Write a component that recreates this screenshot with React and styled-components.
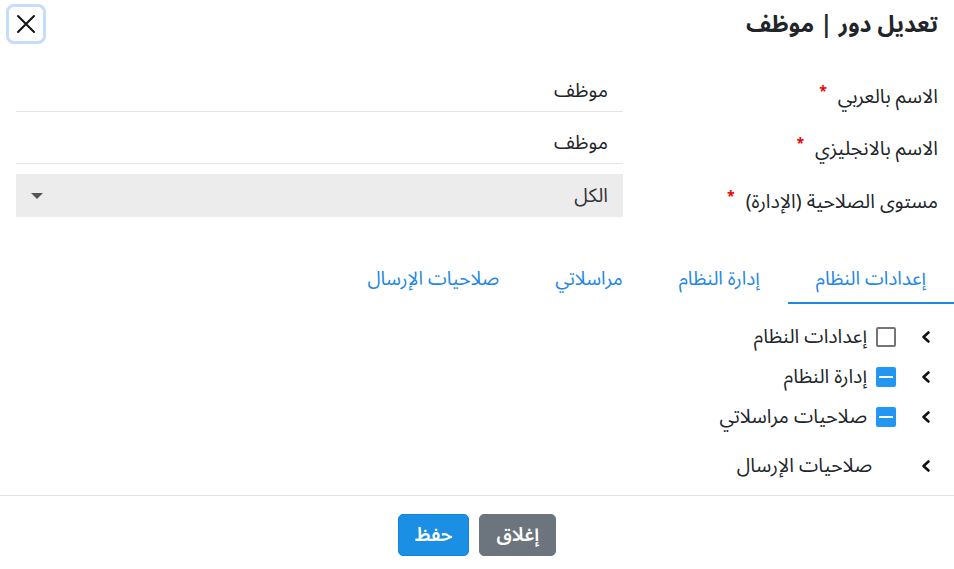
import React from 'react'
import styled, { createGlobalStyle } from 'styled-components'

const GlobalStyle = createGlobalStyle`
  * { box-sizing: border-box; }
  body {
    margin: 0;
    background: #fff;
    color: #212529;
    font-family: "Noto Sans Arabic", "DejaVu Sans", "Noto Sans", sans-serif;
  }
`

const Dialog = styled.div`
  direction: rtl;
  width: 954px;
  min-height: 569px;
  display: flex;
  flex-direction: column;
  background: #fff;
`

const Header = styled.header`
  height: 44px;
  display: flex;
  justify-content: space-between;
  align-items: center;
  padding: 4px 16px 0 6px;
`

const Title = styled.h2`
  margin: 0;
  font-size: 23px;
  line-height: 1;
  font-weight: 700;
  color: #212529;
`

const CloseButton = styled.button`
  width: 40px;
  height: 40px;
  display: flex;
  align-items: center;
  justify-content: center;
  background: #fff;
  border: 3px solid #c5dcfb;
  border-radius: 8px;
  padding: 0;
  cursor: pointer;
`

const Body = styled.div`
  padding: 0 16px 8px;
  flex: 1;
`

const Form = styled.div`
  margin-top: 26px;
  display: flex;
  flex-direction: column;
  gap: 10px;
`

const FormRow = styled.div`
  display: grid;
  grid-template-columns: 300px 1fr;
  column-gap: 15px;
  align-items: center;
`

const Label = styled.label`
  height: 42px;
  font-size: 19.5px;
  line-height: 28px;
  padding-top: 13px;
  color: #212529;
`

const Required = styled.span`
  color: #e00;
  font-size: 14px;
  line-height: 0;
  font-weight: 700;
  margin-right: 11px;
  vertical-align: 7px;
`

const TextInput = styled.div`
  height: 42px;
  display: flex;
  align-items: center;
  padding: 0 15px;
  font-size: 19.5px;
  line-height: 28px;
  border-bottom: 1px solid #e3e3e3;
`

const Select = styled.div`
  height: 43px;
  display: flex;
  align-items: center;
  justify-content: space-between;
  padding: 0 15px 0 14px;
  background: #ececec;
  font-size: 19.5px;
  line-height: 28px;
  color: #333;
`

const Caret = styled.span`
  width: 0;
  height: 0;
  border-left: 6px solid transparent;
  border-right: 6px solid transparent;
  border-top: 6px solid #555;
  margin-left: 1px;
`

const TabBar = styled.div`
  display: flex;
  margin: 38px -16px 0 0;
`

const Tab = styled.div`
  padding: 12px 28px 11px;
  font-size: 19px;
  line-height: 24px;
  color: #1e88e5;
  border-bottom: 2px solid ${p => (p.$active ? '#1e88e5' : 'transparent')};
  cursor: pointer;
`

const Tree = styled.div`
  margin-top: 13px;
  display: flex;
  flex-direction: column;
`

const TreeRow = styled.div`
  display: flex;
  align-items: center;
  height: ${p => (p.$tall ? '50px' : '40px')};
  padding-top: ${p => (p.$tall ? '8px' : '0')};
  font-size: 19.5px;
  line-height: 28px;
`

const Chevron = styled.span`
  width: 24px;
  height: 24px;
  display: flex;
  align-items: center;
  justify-content: center;
  margin-left: 18px;
`

const Box = styled.span`
  width: 20px;
  height: 20px;
  border-radius: 2px;
  display: flex;
  align-items: center;
  justify-content: center;
  margin-left: 9px;
  border: 2px solid ${p => (p.$state === 'mixed' ? '#2196f3' : '#757575')};
  background: ${p => (p.$state === 'mixed' ? '#2196f3' : '#fff')};
`

const Dash = styled.span`
  width: 14px;
  height: 2px;
  background: #fff;
`

const Spacer = styled.span`
  width: 24px;
`

const Footer = styled.footer`
  border-top: 1px solid #dee2e6;
  padding: 18px 0 14px;
  display: flex;
  justify-content: center;
  gap: 10px;
`

const Button = styled.button`
  height: 42px;
  padding: 0 16px;
  border-radius: 5px;
  font-family: inherit;
  font-size: 19px;
  line-height: 1;
  font-weight: 600;
  color: #fff;
  border: 1px solid ${p => (p.$variant === 'primary' ? '#1683e0' : '#6c757d')};
  background: ${p => (p.$variant === 'primary' ? '#1a8fe3' : '#6c757d')};
  cursor: pointer;
`

const CloseIcon = () => (
  <svg width="20" height="20" viewBox="0 0 20 20">
    <path d="M2 2 L18 18 M18 2 L2 18" stroke="#111" strokeWidth="2" strokeLinecap="round" />
  </svg>
)

const ChevronIcon = () => (
  <svg width="12" height="14" viewBox="0 0 12 14">
    <path d="M8.5 2.5 L3.5 7 L8.5 11.5" fill="none" stroke="#111" strokeWidth="2.6" strokeLinecap="round" strokeLinejoin="round" />
  </svg>
)

const fields = [
  { label: 'الاسم بالعربي', value: 'موظف' },
  { label: 'الاسم بالانجليزي', value: 'موظف' },
]

const tabs = ['إعدادات النظام', 'إدارة النظام', 'مراسلاتي', 'صلاحيات الإرسال']

const treeItems = [
  { label: 'إعدادات النظام', state: 'none' },
  { label: 'إدارة النظام', state: 'mixed' },
  { label: 'صلاحيات مراسلاتي', state: 'mixed' },
  { label: 'صلاحيات الإرسال', state: null },
]

export default function App() {
  return (
    <Dialog>
      <GlobalStyle />
      <Header>
        <Title>تعديل دور | موظف</Title>
        <CloseButton aria-label="إغلاق">
          <CloseIcon />
        </CloseButton>
      </Header>
      <Body>
        <Form>
          {fields.map(f => (
            <FormRow key={f.label}>
              <Label>
                {f.label}
                <Required>*</Required>
              </Label>
              <TextInput>{f.value}</TextInput>
            </FormRow>
          ))}
          <FormRow>
            <Label>
              مستوى الصلاحية (الإدارة)
              <Required>*</Required>
            </Label>
            <Select>
              <span>الكل</span>
              <Caret />
            </Select>
          </FormRow>
        </Form>

        <TabBar>
          {tabs.map((t, i) => (
            <Tab key={t} $active={i === 0}>{t}</Tab>
          ))}
        </TabBar>

        <Tree>
          {treeItems.map(item => (
            <TreeRow key={item.label} $tall={item.state === null}>
              <Chevron><ChevronIcon /></Chevron>
              {item.state === null ? (
                <Spacer />
              ) : (
                <Box $state={item.state}>{item.state === 'mixed' && <Dash />}</Box>
              )}
              <span>{item.label}</span>
            </TreeRow>
          ))}
        </Tree>
      </Body>
      <Footer>
        <Button>إغلاق</Button>
        <Button $variant="primary">حفظ</Button>
      </Footer>
    </Dialog>
  )
}
